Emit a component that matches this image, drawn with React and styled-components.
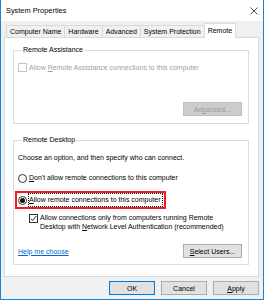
import React from "react";
import styled, { createGlobalStyle } from "styled-components";

const GlobalStyle = createGlobalStyle`
  html, body { margin: 0; padding: 0; background: #ffffff; }
  body { font-family: "Liberation Sans", Arial, sans-serif; }
  * { box-sizing: border-box; }
`;

const Window = styled.div`
  width: 264px;
  height: 300px;
  display: flex;
  flex-direction: column;
  border: 1px solid #1883d7;
  border-top: none;
  background: #f0f0f0;
  font-size: 7px;
  color: #000;
`;

const TitleBar = styled.div`
  height: 21px;
  flex: none;
  display: flex;
  align-items: center;
  justify-content: space-between;
  padding: 0 5px 0 5px;
  background: #ffffff;
  font-size: 7.4px;
`;

const Body = styled.div`
  flex: 1;
  display: flex;
  flex-direction: column;
  padding: 2px 4px 0 3px;
`;

const TabStrip = styled.div`
  height: 14px;
  display: flex;
  align-items: flex-end;
  padding-left: 3px;
`;

const Tab = styled.div`
  position: relative;
  height: ${(p) => (p.$active ? "15px" : "12px")};
  margin-bottom: ${(p) => (p.$active ? "-1px" : "0")};
  margin-left: -1px;
  padding: 0 3px;
  display: flex;
  align-items: center;
  border: 1px solid #d9d9d9;
  border-bottom: none;
  background: ${(p) => (p.$active ? "#ffffff" : "#f0f0f0")};
  z-index: ${(p) => (p.$active ? 1 : 0)};
  white-space: nowrap;
  line-height: 10px;
`;

const Panel = styled.div`
  background: #ffffff;
  border: 1px solid #d9d9d9;
  padding: 7px 9px 11px 8px;
  display: flex;
  flex-direction: column;
  gap: 11px;
`;

const Group = styled.fieldset`
  margin: 0;
  border: 1px solid #dcdcdc;
  padding: ${(p) => p.$pad};
  min-width: 0;
  display: flex;
  flex-direction: column;
`;

const Legend = styled.legend`
  padding: 0 1px;
  margin-left: 4px;
  line-height: 10px;
  font-size: 7px;
`;

const Line = styled.div`
  line-height: 10px;
  height: 10px;
  margin-top: ${(p) => p.$mt || "0"};
  white-space: nowrap;
`;

const CheckRow = styled.div`
  display: flex;
  align-items: flex-start;
  gap: ${(p) => p.$gap || "2px"};
  margin-top: ${(p) => p.$mt || "0"};
  margin-left: ${(p) => p.$indent || "0"};
  color: ${(p) => (p.$disabled ? "#a0a0a0" : "#000")};
`;

const Box = styled.span`
  width: 9px;
  height: 9px;
  flex: none;
  margin-top: ${(p) => p.$top || "1px"};
  border: 1px solid ${(p) => (p.$disabled ? "#c4c4c4" : "#333333")};
  background: #fff;
  display: flex;
  align-items: center;
  justify-content: center;
`;

const CheckText = styled.div`
  line-height: ${(p) => p.$lh || "10px"};
  white-space: nowrap;
`;

const RadioRow = styled.div`
  display: flex;
  align-items: center;
  height: 14px;
  gap: 1px;
  margin-top: ${(p) => p.$mt || "0"};
`;

const Radio = styled.span`
  width: 9px;
  height: 9px;
  flex: none;
  border-radius: 50%;
  border: 1px solid #333333;
  background: #fff;
  display: flex;
  align-items: center;
  justify-content: center;
  &::after {
    content: "";
    display: ${(p) => (p.$checked ? "block" : "none")};
    width: 5px;
    height: 5px;
    border-radius: 50%;
    background: #111;
  }
`;

const RadioLabel = styled.span`
  border: 1px dotted ${(p) => (p.$focus ? "#111" : "transparent")};
  padding: 0 1px 0 0;
  line-height: 12px;
  white-space: nowrap;
`;

const Highlight = styled.div`
  align-self: flex-start;
  margin-left: -3px;
  margin-top: 6px;
  border: 2px solid #ee1c24;
  padding: 0 1px;
`;

const U = styled.span`
  text-decoration: underline;
  text-underline-offset: 1px;
`;

const ButtonRow = styled.div`
  display: flex;
  justify-content: ${(p) => p.$justify || "flex-end"};
  align-items: center;
  gap: 6px;
  margin-top: ${(p) => p.$mt || "0"};
`;

const Button = styled.div`
  width: ${(p) => p.$w || "46px"};
  height: 14px;
  display: flex;
  align-items: center;
  justify-content: center;
  background: ${(p) => (p.$disabled ? "#cccccc" : "#e1e1e1")};
  border: 1px solid ${(p) => (p.$primary ? "#0078d7" : p.$disabled ? "#bfbfbf" : "#adadad")};
  color: ${(p) => (p.$disabled ? "#9a9a9a" : "#000")};
  font-size: 7px;
  white-space: nowrap;
`;

const Link = styled.span`
  color: #0066cc;
  text-decoration: underline;
  text-underline-offset: 1px;
`;

const Check = () => (
  <svg width="7" height="7" viewBox="0 0 7 7">
    <path d="M0.8 3.6 L2.6 5.4 L6.2 1" fill="none" stroke="#111" strokeWidth="0.9" />
  </svg>
);

const CloseIcon = () => (
  <svg width="8" height="8" viewBox="0 0 8 8">
    <path d="M0.5 0.5 L7.5 7.5 M7.5 0.5 L0.5 7.5" stroke="#222" strokeWidth="0.8" />
  </svg>
);

export default function App() {
  return (
    <>
      <GlobalStyle />
      <Window>
        <TitleBar>
          <span>System Properties</span>
          <CloseIcon />
        </TitleBar>
        <Body>
          <TabStrip>
            <Tab>Computer Name</Tab>
            <Tab>Hardware</Tab>
            <Tab>Advanced</Tab>
            <Tab>System Protection</Tab>
            <Tab $active>Remote</Tab>
          </TabStrip>
          <Panel>
            <Group $pad="8px 6px 7px 4px">
              <Legend>Remote Assistance</Legend>
              <CheckRow $disabled $gap="2px">
                <Box $disabled $top="0" />
                <CheckText>
                  Allow <U>R</U>emote Assistance connections to this computer
                </CheckText>
              </CheckRow>
              <ButtonRow $mt="29px">
                <Button $w="59px" $disabled>
                  Ad<U>v</U>anced...
                </Button>
              </ButtonRow>
            </Group>
            <Group $pad="8px 6px 6px 4px">
              <Legend>Remote Desktop</Legend>
              <Line>Choose an option, and then specify who can connect.</Line>
              <RadioRow $mt="8px">
                <Radio />
                <RadioLabel>
                  <U>D</U>on&apos;t allow remote connections to this computer
                </RadioLabel>
              </RadioRow>
              <Highlight>
                <RadioRow>
                  <Radio $checked />
                  <RadioLabel $focus>
                    <U>A</U>llow remote connections to this computer
                  </RadioLabel>
                </RadioRow>
              </Highlight>
              <CheckRow $mt="4px" $indent="11px" $gap="2px">
                <Box>
                  <Check />
                </Box>
                <CheckText $lh="9px">
                  Allow connections only from computers running Remote
                  <br />
                  Desktop with <U>N</U>etwork Level Authentication (recommended)
                </CheckText>
              </CheckRow>
              <ButtonRow $mt="13px" $justify="space-between">
                <Link>Help me choose</Link>
                <Button $w="59px">
                  <U>S</U>elect Users...
                </Button>
              </ButtonRow>
            </Group>
          </Panel>
          <ButtonRow $mt="4px">
            <Button $primary>OK</Button>
            <Button>Cancel</Button>
            <Button>
              <U>A</U>pply
            </Button>
          </ButtonRow>
        </Body>
      </Window>
    </>
  );
}
